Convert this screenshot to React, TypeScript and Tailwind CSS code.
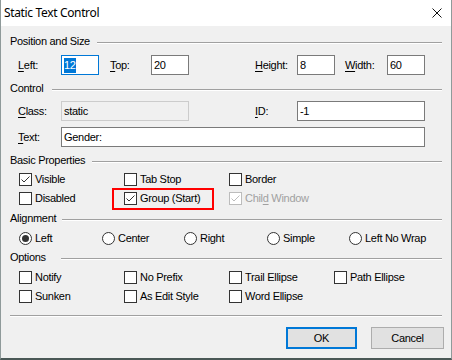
import React from "react";

const font = { fontFamily: '"Liberation Sans", Arial, sans-serif' };

function U({ children }: { children: React.ReactNode }) {
  return <span className="underline underline-offset-[2px] decoration-[1px]">{children}</span>;
}

function Header({ label, w }: { label: string; w: string }) {
  return (
    <div className="flex items-center h-[13px]">
      <span className={`${w} shrink-0 leading-[13px]`}>{label}</span>
      <div className="flex-1 h-[2px] mt-[2px] border-t border-t-[#a0a0a0] border-b border-b-white" />
    </div>
  );
}

function Check({ checked = false, disabled = false }: { checked?: boolean; disabled?: boolean }) {
  return (
    <span
      className={`w-[13px] h-[13px] shrink-0 border bg-white flex items-center justify-center ${
        disabled ? "border-[#bcbcbc]" : "border-[#333333]"
      }`}
    >
      {checked && (
        <svg width="11" height="11" viewBox="0 0 11 11">
          <path
            d="M1.5 5.5 L4 8 L9.5 2.5"
            fill="none"
            stroke={disabled ? "#bcbcbc" : "#333333"}
            strokeWidth="1"
          />
        </svg>
      )}
    </span>
  );
}

function CheckItem({
  label,
  checked,
  disabled,
  children,
}: {
  label: React.ReactNode;
  checked?: boolean;
  disabled?: boolean;
  children?: React.ReactNode;
}) {
  return (
    <div className="relative flex items-center h-[13px] gap-[3px]">
      <Check checked={checked} disabled={disabled} />
      <span className={`whitespace-nowrap leading-[13px] ${disabled ? "text-[#a0a0a0]" : "text-black"}`}>
        {label}
      </span>
      {children}
    </div>
  );
}

function Radio({ label, selected = false }: { label: string; selected?: boolean }) {
  return (
    <div className="flex items-center h-[13px] gap-[3px]">
      <span className="w-[13px] h-[13px] rounded-full border border-[#333333] bg-white flex items-center justify-center shrink-0">
        {selected && <span className="w-[7px] h-[7px] rounded-full bg-[#333333]" />}
      </span>
      <span className="whitespace-nowrap leading-[13px]">{label}</span>
    </div>
  );
}

function Field({
  value,
  w,
  focused,
  disabled,
}: {
  value: string;
  w: string;
  focused?: boolean;
  disabled?: boolean;
}) {
  return (
    <div
      className={`${w} h-[20px] shrink-0 border flex items-center pl-[2px] ${
        focused
          ? "border-[#0078d7] bg-white"
          : disabled
          ? "border-[#cccccc] bg-[#f0f0f0]"
          : "border-[#7a7a7a] bg-white"
      }`}
    >
      {focused ? (
        <span className="bg-[#0078d7] text-white leading-[15px]">{value}</span>
      ) : (
        <span className="leading-[15px]">{value}</span>
      )}
    </div>
  );
}

export default function App() {
  return (
    <div
      className="w-[452px] h-[360px] bg-[#f0f0f0] flex flex-col border-x border-[#8f9a9a] border-b-2 border-b-[#4a5856] text-[11px] tracking-[-0.3px] text-black"
      style={font}
    >
      {/* title bar */}
      <div className="h-[26px] bg-white flex items-center justify-between pl-[3px] pr-[9px] shrink-0">
        <span
          className="text-[12px] tracking-[-0.35px] text-black"
          style={{ fontFamily: '"Noto Sans", "Open Sans", sans-serif' }}
        >
          Static Text Control
        </span>
        <svg width="10" height="10" viewBox="0 0 10 10">
          <path d="M0.5 0.5 L9.5 9.5 M9.5 0.5 L0.5 9.5" stroke="#111" strokeWidth="1" />
        </svg>
      </div>

      <div className="flex flex-col px-[9px]">
        {/* Position and Size */}
        <div className="mt-[9px]">
          <Header label="Position and Size" w="w-[87px]" />
        </div>
        <div className="flex items-center mt-[7px] pl-[8px]">
          <span className="w-[43px]">
            <U>L</U>eft:
          </span>
          <Field value="12" w="w-[38px]" focused />
          <span className="w-[41px] ml-[11px]">
            <U>T</U>op:
          </span>
          <Field value="20" w="w-[38px]" />
          <span className="w-[42px] ml-[66px]">
            <U>H</U>eight:
          </span>
          <Field value="8" w="w-[38px]" />
          <span className="w-[42px] ml-[10px]">
            <U>W</U>idth:
          </span>
          <Field value="60" w="w-[38px]" />
        </div>

        {/* Control */}
        <div className="mt-[7px]">
          <Header label="Control" w="w-[42px]" />
        </div>
        <div className="flex items-center mt-[6px] pl-[8px]">
          <span className="w-[43px]">
            <U>C</U>lass:
          </span>
          <Field value="static" w="w-[128px]" disabled />
          <span className="w-[42px] ml-[66px]">
            <U>I</U>D:
          </span>
          <Field value="-1" w="w-[128px]" />
        </div>
        <div className="flex items-center mt-[6px] pl-[8px]">
          <span className="w-[43px]">
            <U>T</U>ext:
          </span>
          <Field value="Gender:" w="w-[364px]" />
        </div>

        {/* Basic Properties */}
        <div className="mt-[7px]">
          <Header label="Basic Properties" w="w-[82px]" />
        </div>
        <div className="grid grid-cols-[105px_105px_105px] gap-y-[6px] mt-[6px] pl-[9px]">
          <CheckItem label="Visible" checked />
          <CheckItem label="Tab Stop" />
          <CheckItem label="Border" />
          <CheckItem label="Disabled" />
          <CheckItem label="Group (Start)" checked>
            <div className="absolute left-[-12px] top-[-4px] w-[102px] h-[22px] border-2 border-[#ff0000]" />
          </CheckItem>
          <CheckItem
            label={
              <>
                Chil<U>d</U> Window
              </>
            }
            checked
            disabled
          />
        </div>

        {/* Alignment */}
        <div className="mt-[7px]">
          <Header label="Alignment" w="w-[52px]" />
        </div>
        <div className="grid grid-cols-[83px_82px_83px_82px_82px] mt-[7px] pl-[9px]">
          <Radio label="Left" selected />
          <Radio label="Center" />
          <Radio label="Right" />
          <Radio label="Simple" />
          <Radio label="Left No Wrap" />
        </div>

        {/* Options */}
        <div className="mt-[6px]">
          <Header label="Options" w="w-[51px]" />
        </div>
        <div className="grid grid-cols-[105px_105px_105px_105px] gap-y-[6px] mt-[7px] pl-[9px]">
          <CheckItem label="Notify" />
          <CheckItem label="No Prefix" />
          <CheckItem label="Trail Ellipse" />
          <CheckItem label="Path Ellipse" />
          <CheckItem label="Sunken" />
          <CheckItem label="As Edit Style" />
          <CheckItem label="Word Ellipse" />
        </div>

        <div className="mt-[12px] h-[2px] border-t border-t-[#a0a0a0] border-b border-b-white" />

        <div className="flex justify-end gap-[14px] mt-[10px] -mr-[2px]">
          <button className="w-[71px] h-[22px] border-2 border-[#0078d7] bg-[#e1e1e1] text-[11px] text-black">
            OK
          </button>
          <button className="w-[73px] h-[22px] border border-[#adadad] bg-[#e1e1e1] text-[11px] text-black">
            Cancel
          </button>
        </div>
      </div>
    </div>
  );
}
